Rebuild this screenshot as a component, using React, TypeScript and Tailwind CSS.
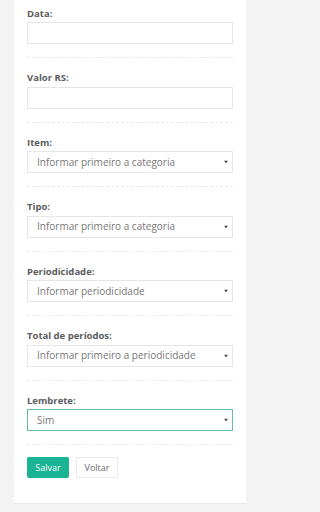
import React from "react";

const font = { fontFamily: '"Open Sans", "Liberation Sans", sans-serif' };

function Caret() {
  return (
    <svg className="absolute right-[4px] top-1/2 -translate-y-1/2" width="4" height="3" viewBox="0 0 4 3">
      <path d="M0 0h4L2 3z" fill="#444" />
    </svg>
  );
}

function Label({ children }: { children: React.ReactNode }) {
  return (
    <label className="block h-[16.5px] text-[9.5px] font-bold leading-[16.5px] text-[#5a5c5e]">{children}</label>
  );
}

function Field({ label, children }: { label: string; children: React.ReactNode }) {
  return (
    <div>
      <Label>{label}</Label>
      {children}
      <div className="mb-[12px] mt-[13px] border-t border-dashed border-[#e7eaec]" />
    </div>
  );
}

function TextInput() {
  return <div className="h-[22px] border border-[#e5e6e7] bg-white" />;
}

function Select({ value, active }: { value: string; active?: boolean }) {
  return (
    <div
      className={
        "relative flex h-[22px] items-center border bg-white pl-[9px] text-[10px] text-[#777] " +
        (active ? "border-[#5fbfa9]" : "border-[#e5e6e7]")
      }
    >
      <span>{value}</span>
      <Caret />
    </div>
  );
}

export default function App() {
  return (
    <div className="min-h-[512px] bg-[#f3f3f4]" style={font}>
      <div className="mx-[14px] w-[232px] border-b border-[#e7eaec] bg-white px-[13px] pt-[5.5px] pb-[25px]">
        <Field label="Data:">
          <TextInput />
        </Field>
        <Field label="Valor RS:">
          <TextInput />
        </Field>
        <Field label="Item:">
          <Select value="Informar primeiro a categoria" />
        </Field>
        <Field label="Tipo:">
          <Select value="Informar primeiro a categoria" />
        </Field>
        <Field label="Periodicidade:">
          <Select value="Informar periodicidade" />
        </Field>
        <Field label="Total de períodos:">
          <Select value="Informar primeiro a periodicidade" />
        </Field>
        <div>
          <Label>Lembrete:</Label>
          <Select value="Sim" active />
          <div className="mt-[13px] border-t border-dashed border-[#e7eaec]" />
        </div>
        <div className="mt-[12px] flex gap-[7px]">
          <button className="h-[21px] w-[42px] rounded-[2px] border border-[#1ab394] bg-[#1ab394] text-[9px] text-white">
            Salvar
          </button>
          <button className="h-[21px] w-[42px] rounded-[2px] border border-[#e7eaec] bg-white text-[9px] text-[#676a6c]">
            Voltar
          </button>
        </div>
      </div>
    </div>
  );
}
